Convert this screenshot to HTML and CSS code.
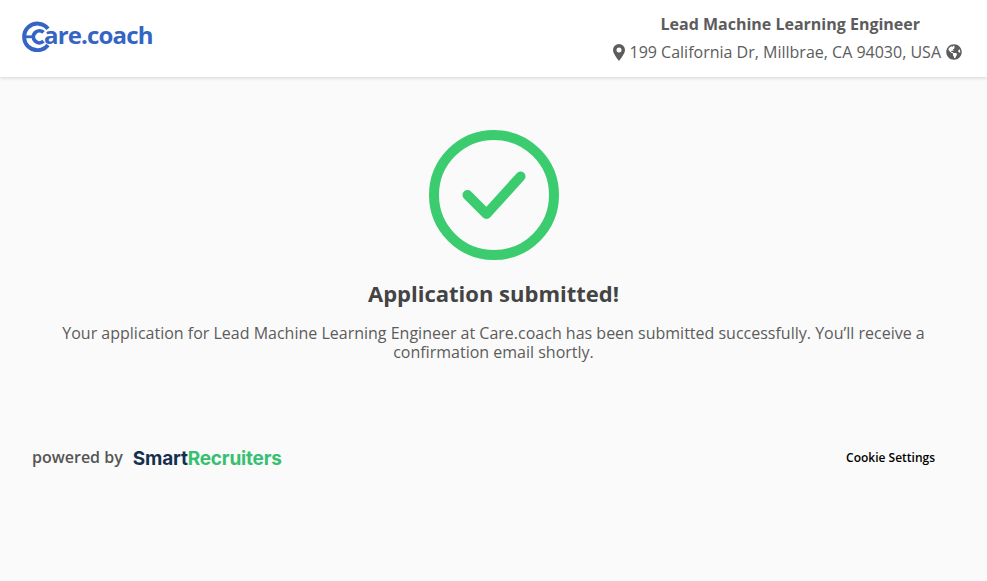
FILE: index.html
```html
<!DOCTYPE html>
<html lang="en">
<head>
<meta charset="utf-8">
<title>Application submitted</title>
<link rel="stylesheet" href="styles.css">
</head>
<body>
<header class="header">
  <div class="logo">
    <svg class="logo-mark" width="32" height="32" viewBox="0 0 32 32" aria-hidden="true">
      <path d="M27 8.800A13.300 13.300 0 1 0 27 25" fill="none" stroke="#3565c4" stroke-width="4"/>
      <path d="M22.500 12.400A6 6 0 1 0 22.500 21.200" fill="none" stroke="#3565c4" stroke-width="3.800"/>
      <path d="M2 16.800H11" fill="none" stroke="#3565c4" stroke-width="2.800"/>
    </svg>
    <span class="logo-text">are.coach</span>
  </div>
  <div class="job">
    <div class="job-title">Lead Machine Learning Engineer</div>
    <div class="job-location">
      <svg class="pin" width="12" height="17" viewBox="0 0 12 17" aria-hidden="true">
        <path fill-rule="evenodd" d="M6 0a6 6 0 0 1 6 6c0 3.200-3.600 8-6 11C3.600 14 0 9.200 0 6a6 6 0 0 1 6-6zm0 3.500a2.500 2.500 0 1 0 0 5 2.500 2.500 0 0 0 0-5z"/>
      </svg>
      <span>199 California Dr, Millbrae, CA 94030, USA</span>
      <svg class="globe" width="16" height="16" viewBox="0 0 496 512" aria-hidden="true">
        <path d="M248 8C111.030 8 0 119.030 0 256s111.030 248 248 248 248-111.030 248-248S384.970 8 248 8zm82.290 357.600c-3.900 3.880-7.990 7.950-11.310 11.280-2.990 3-5.100 6.700-6.170 10.710-1.510 5.660-2.730 11.380-4.770 16.870l-17.390 46.850c-13.760 3-28 4.690-42.650 4.690v-27.380c1.690-12.620-7.640-36.260-22.630-51.250-6-6-9.370-14.140-9.370-22.630v-32.010c0-11.640-6.270-22.340-16.460-27.970-14.370-7.950-34.810-19.060-48.810-26.110-11.480-5.780-22.100-13.140-31.650-21.750l-.8-.72a114.792 114.792 0 0 1-18.060-20.740c-9.380-13.770-24.660-36.420-34.590-51.140 20.470-45.500 57.360-82.040 103.200-101.890l24.010 12.010C203.480 89.740 216 82.010 216 70.110v-11.300c7.990-1.290 16.120-2.110 24.450-2.430l28.300 28.300c6.250 6.250 6.250 16.380 0 22.630L264 112l-10.340 10.340c-3.120 3.120-3.120 8.190 0 11.310l4.690 4.690c3.120 3.120 3.120 8.190 0 11.310l-8 8a8.008 8.008 0 0 1-5.670 2.340h-8.990c-2.080 0-4.080.81-5.580 2.260l-9.920 9.650a8.008 8.008 0 0 0-1.580 9.310l15.590 31.190c2.660 5.320-1.210 11.580-7.160 11.580h-5.640c-1.930 0-3.790-.7-5.240-1.960l-9.280-8.060a16.017 16.017 0 0 0-15.550-3.100l-31.170 10.390a11.950 11.950 0 0 0-8.170 11.340c0 4.530 2.560 8.660 6.610 10.690l11.080 5.540c9.410 4.710 19.790 7.160 30.310 7.160s22.590 27.290 32 32h66.750c8.490 0 16.620 3.370 22.630 9.370l13.690 13.690a30.503 30.503 0 0 1 8.930 21.570 46.536 46.536 0 0 1-13.720 32.980zM417 274.250c-5.790-1.450-10.840-5-14.150-9.970l-17.980-26.970a23.970 23.970 0 0 1 0-26.620l19.590-29.380c2.320-3.470 5.500-6.280 9.230-8.150l12.980-6.490C440.200 193.590 448 223.870 448 256c0 8.670-.74 17.160-1.820 25.540L417 274.250z"/>
      </svg>
    </div>
  </div>
</header>
<main class="main">
  <svg class="check" width="130" height="130" viewBox="0 0 130 130" aria-hidden="true">
    <circle cx="65" cy="65" r="60" fill="none" stroke="#3bcc6f" stroke-width="10"/>
    <path d="M38.500 65 57.500 84 91.500 46.500" fill="none" stroke="#3bcc6f" stroke-width="10" stroke-linecap="round" stroke-linejoin="round"/>
  </svg>
  <h1 class="heading">Application submitted!</h1>
  <p class="message">Your application for Lead Machine Learning Engineer at Care.coach has been submitted successfully. You’ll receive a confirmation email shortly.</p>
</main>
<footer class="footer">
  <div class="powered">
    <span class="powered-label">powered by</span>
    <span class="brand"><span class="brand-dark">Smart</span><span class="brand-green">Recruiters</span></span>
  </div>
  <a class="cookie" href="#">Cookie Settings</a>
</footer>
</body>
</html>
```
FILE: styles.css
```css
* { box-sizing: border-box; }
html, body { margin: 0; height: 100%; }
body {
  background: #fafafa;
  font-family: "Open Sans", "Liberation Sans", sans-serif;
  color: #5c5c5c;
}
.header {
  height: 77px;
  background: #fff;
  box-shadow: 0 1px 4px rgba(0, 0, 0, 0.16);
  display: flex;
  justify-content: space-between;
  align-items: flex-start;
  padding: 0 25px 0 21px;
}
.logo { display: flex; align-items: center; height: 72px; }
.logo-mark { flex: none; }
.logo-text {
  font-size: 24px;
  font-weight: 700;
  color: #3565c4;
  margin: -4px 0 0 -9px;
  letter-spacing: -0.85px;
}
.job { text-align: center; padding-top: 13px; }
.job-title { font-size: 16px; font-weight: 700; line-height: 22px; color: #5c5c5c; padding-left: 6px; }
.job-location {
  display: flex;
  align-items: center;
  gap: 5px;
  font-size: 16px;
  line-height: 22px;
  margin-top: 6px;
}
.pin { fill: #5c5c5c; flex: none; }
.globe { fill: #5c5c5c; flex: none; }
.main {
  display: flex;
  flex-direction: column;
  align-items: center;
  padding: 53px 32px 0;
}
.check { display: block; }
.heading {
  margin: 18px 0 0;
  font-size: 22px;
  line-height: 30px;
  font-weight: 700;
  color: #444;
}
.message {
  margin: 16px 0 0;
  font-size: 16px;
  line-height: 19px;
  text-align: center;
  color: #5c5c5c;
  max-width: 880px;
}
.footer {
  display: flex;
  justify-content: space-between;
  align-items: center;
  padding: 0 52px 0 32px;
  margin-top: 83px;
}
.powered { display: flex; align-items: center; gap: 10px; }
.powered-label { font-size: 16px; font-weight: 600; color: #555; margin-top: -1px; }
.brand { font-family: "Inter", "Open Sans", sans-serif; font-size: 19px; font-weight: 700; letter-spacing: -0.2px; margin-top: 2px; }
.brand-dark { color: #14304f; }
.brand-green { color: #37bf72; }
.cookie { font-size: 12px; font-weight: 600; color: #000; text-decoration: none; }
```
